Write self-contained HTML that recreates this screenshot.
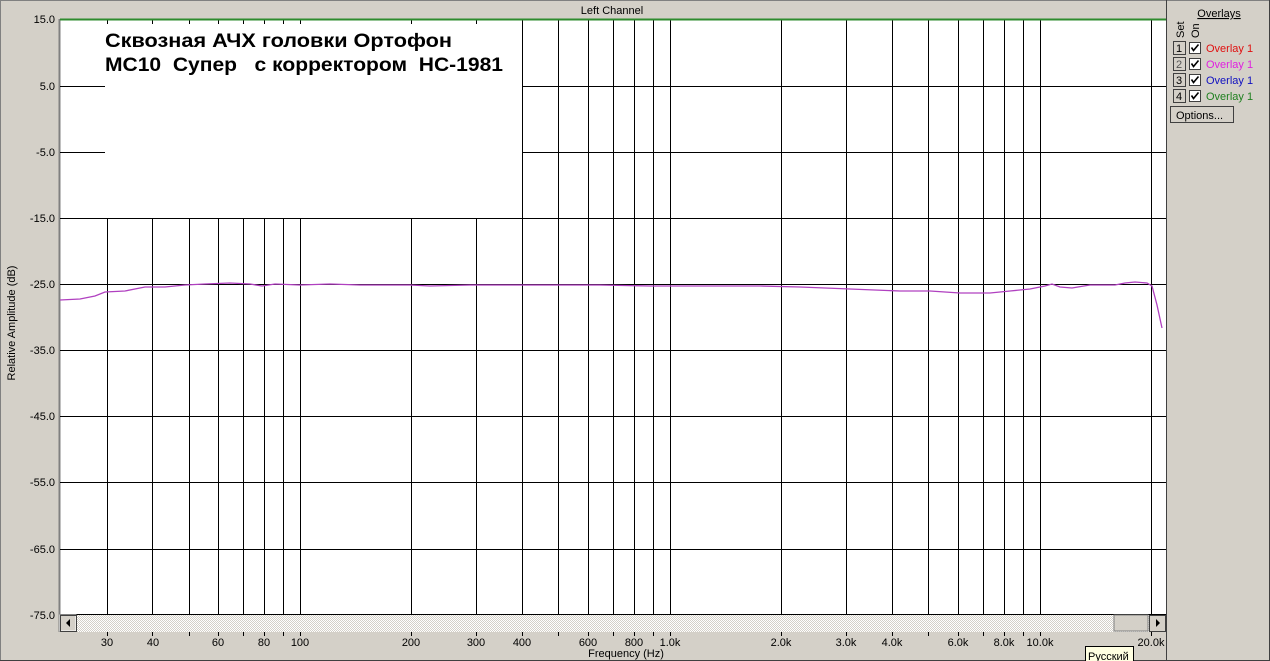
<!DOCTYPE html>
<html><head><meta charset="utf-8"><style>
html,body{margin:0;padding:0;background:#d4d0c8;}
svg{display:block;font-family:"Liberation Sans",sans-serif;}
</style></head><body>
<svg width="1270" height="661" viewBox="0 0 1270 661" xmlns="http://www.w3.org/2000/svg">
<defs>
<pattern id="dots" width="2" height="2" patternUnits="userSpaceOnUse"><rect width="2" height="2" fill="#fff"/><rect width="1" height="1" fill="#d4d0c8"/><rect x="1" y="1" width="1" height="1" fill="#d4d0c8"/></pattern>
</defs>
<rect x="0" y="0" width="1270" height="661" fill="#d4d0c8"/>
<line x1="0.5" y1="0" x2="0.5" y2="661" stroke="#808080"/>
<line x1="0" y1="0.5" x2="1270" y2="0.5" stroke="#808080"/>
<line x1="0" y1="660.5" x2="1270" y2="660.5" stroke="#404040"/>
<line x1="1269.5" y1="0" x2="1269.5" y2="661" stroke="#404040"/>
<line x1="1166.5" y1="0" x2="1166.5" y2="661" stroke="#404040"/>
<text x="612" y="14" font-size="11" text-anchor="middle">Left Channel</text>
<rect x="60" y="19" width="1106" height="596" fill="#fff"/>
<line x1="59.5" y1="19" x2="59.5" y2="632" stroke="#808080" stroke-width="2"/>
<g stroke="#000" stroke-width="1">
<line x1="60" x2="1166" y1="86.5" y2="86.5"/>
<line x1="60" x2="1166" y1="152.5" y2="152.5"/>
<line x1="60" x2="1166" y1="218.5" y2="218.5"/>
<line x1="60" x2="1166" y1="284.5" y2="284.5"/>
<line x1="60" x2="1166" y1="350.5" y2="350.5"/>
<line x1="60" x2="1166" y1="416.5" y2="416.5"/>
<line x1="60" x2="1166" y1="482.5" y2="482.5"/>
<line x1="60" x2="1166" y1="549.5" y2="549.5"/>
<line x1="60" x2="1166" y1="614.5" y2="614.5"/>
<line y1="19" y2="615" x1="107.5" x2="107.5"/><line y1="19" y2="615" x1="152.5" x2="152.5"/><line y1="19" y2="615" x1="189.5" x2="189.5"/><line y1="19" y2="615" x1="218.5" x2="218.5"/><line y1="19" y2="615" x1="243.5" x2="243.5"/><line y1="19" y2="615" x1="264.5" x2="264.5"/><line y1="19" y2="615" x1="283.5" x2="283.5"/><line y1="19" y2="615" x1="300.5" x2="300.5"/><line y1="19" y2="615" x1="411.5" x2="411.5"/><line y1="19" y2="615" x1="476.5" x2="476.5"/><line y1="19" y2="615" x1="522.5" x2="522.5"/><line y1="19" y2="615" x1="558.5" x2="558.5"/><line y1="19" y2="615" x1="588.5" x2="588.5"/><line y1="19" y2="615" x1="613.5" x2="613.5"/><line y1="19" y2="615" x1="634.5" x2="634.5"/><line y1="19" y2="615" x1="653.5" x2="653.5"/><line y1="19" y2="615" x1="670.5" x2="670.5"/><line y1="19" y2="615" x1="781.5" x2="781.5"/><line y1="19" y2="615" x1="846.5" x2="846.5"/><line y1="19" y2="615" x1="892.5" x2="892.5"/><line y1="19" y2="615" x1="928.5" x2="928.5"/><line y1="19" y2="615" x1="958.5" x2="958.5"/><line y1="19" y2="615" x1="983.5" x2="983.5"/><line y1="19" y2="615" x1="1004.5" x2="1004.5"/><line y1="19" y2="615" x1="1023.5" x2="1023.5"/><line y1="19" y2="615" x1="1040.5" x2="1040.5"/><line y1="19" y2="615" x1="1151.5" x2="1151.5"/>
</g>
<rect x="105" y="24" width="417" height="194" fill="#fff"/>
<line x1="60" x2="1166" y1="19.5" y2="19.5" stroke="#2e8b2e" stroke-width="2"/>
<text x="105" y="47" font-size="19" font-weight="bold" textLength="347" lengthAdjust="spacingAndGlyphs">Сквозная АЧХ  головки Ортофон</text>
<text x="105" y="71" font-size="19" font-weight="bold" xml:space="preserve" textLength="398" lengthAdjust="spacingAndGlyphs">МС10  Супер   с корректором  НС-1981</text>
<polyline fill="none" stroke="#b040c0" stroke-width="1.3" points="60,300 80,299 95,296 105,292 125,291 145,287 165,287 185,285 205,284 230,283 250,284 262,286 275,284 300,285 330,284 360,285 410,285 430,286 470,285 520,285 560,285 600,285 650,286 700,286 760,286 800,287 850,289 900,291 930,291 960,293 990,293 1010,291 1030,289 1045,286 1052,284 1060,287 1072,288 1090,285 1115,285 1125,283 1135,282 1147,283 1152,286 1157,305 1162,328"/>
<g font-size="11" text-anchor="end">
<text x="55" y="23">15.0</text><text x="55" y="90">5.0</text><text x="55" y="156">-5.0</text><text x="55" y="222">-15.0</text><text x="55" y="288">-25.0</text><text x="55" y="354">-35.0</text><text x="55" y="420">-45.0</text><text x="55" y="486">-55.0</text><text x="55" y="553">-65.0</text><text x="55" y="619">-75.0</text>
</g>
<text transform="translate(15,323) rotate(-90)" font-size="11" text-anchor="middle">Relative Amplitude (dB)</text>
<rect x="60" y="615" width="1106" height="17" fill="url(#dots)"/>
<rect x="60" y="615" width="16" height="16" fill="#d4d0c8" stroke="#fff"/><rect x="60.5" y="615.5" width="16" height="16" fill="none" stroke="#404040"/>
<polygon points="70,619 70,627 66,623" fill="#000"/>
<rect x="1114" y="615" width="34" height="16" fill="#d4d0c8" stroke="#808080"/>
<rect x="1149.5" y="615.5" width="16" height="16" fill="#d4d0c8" stroke="#404040"/>
<polygon points="1156,619 1156,627 1160,623" fill="#000"/>
<g stroke="#000"><line x1="107.5" x2="107.5" y1="632" y2="636"/><line x1="152.5" x2="152.5" y1="632" y2="636"/><line x1="189.5" x2="189.5" y1="632" y2="636"/><line x1="218.5" x2="218.5" y1="632" y2="636"/><line x1="243.5" x2="243.5" y1="632" y2="636"/><line x1="264.5" x2="264.5" y1="632" y2="636"/><line x1="283.5" x2="283.5" y1="632" y2="636"/><line x1="300.5" x2="300.5" y1="632" y2="636"/><line x1="411.5" x2="411.5" y1="632" y2="636"/><line x1="476.5" x2="476.5" y1="632" y2="636"/><line x1="522.5" x2="522.5" y1="632" y2="636"/><line x1="558.5" x2="558.5" y1="632" y2="636"/><line x1="588.5" x2="588.5" y1="632" y2="636"/><line x1="613.5" x2="613.5" y1="632" y2="636"/><line x1="634.5" x2="634.5" y1="632" y2="636"/><line x1="653.5" x2="653.5" y1="632" y2="636"/><line x1="670.5" x2="670.5" y1="632" y2="636"/><line x1="781.5" x2="781.5" y1="632" y2="636"/><line x1="846.5" x2="846.5" y1="632" y2="636"/><line x1="892.5" x2="892.5" y1="632" y2="636"/><line x1="928.5" x2="928.5" y1="632" y2="636"/><line x1="958.5" x2="958.5" y1="632" y2="636"/><line x1="983.5" x2="983.5" y1="632" y2="636"/><line x1="1004.5" x2="1004.5" y1="632" y2="636"/><line x1="1023.5" x2="1023.5" y1="632" y2="636"/><line x1="1040.5" x2="1040.5" y1="632" y2="636"/><line x1="1151.5" x2="1151.5" y1="632" y2="636"/></g>
<g font-size="11" text-anchor="middle">
<text x="107" y="646">30</text><text x="153" y="646">40</text><text x="218" y="646">60</text><text x="264" y="646">80</text><text x="300" y="646">100</text><text x="411" y="646">200</text><text x="476" y="646">300</text><text x="522" y="646">400</text><text x="588" y="646">600</text><text x="634" y="646">800</text><text x="670" y="646">1.0k</text><text x="781" y="646">2.0k</text><text x="846" y="646">3.0k</text><text x="892" y="646">4.0k</text><text x="958" y="646">6.0k</text><text x="1004" y="646">8.0k</text><text x="1040" y="646">10.0k</text><text x="1151" y="646">20.0k</text>
</g>
<text x="626" y="657" font-size="11" text-anchor="middle">Frequency (Hz)</text>
<rect x="1085.5" y="646.5" width="48" height="16" fill="#ffffe1" stroke="#000"/>
<text x="1088" y="660" font-size="11">Русский</text>
<text x="1219" y="17" font-size="11" text-anchor="middle" text-decoration="underline">Overlays</text>
<text transform="translate(1184,38) rotate(-90)" font-size="11">Set</text>
<text transform="translate(1199,38) rotate(-90)" font-size="11">On</text>
<g font-size="11">
<g><rect x="1173.5" y="41.5" width="12" height="13" fill="#d4d0c8" stroke="#404040"/><text x="1176" y="52">1</text><rect x="1189.5" y="42.5" width="11" height="11" fill="#fff" stroke="#404040"/><path d="M1191.5 47.5l2 3 5-6" fill="none" stroke="#000" stroke-width="1.6"/><text x="1206" y="52" fill="#e01010">Overlay 1</text></g>
<g><rect x="1173.5" y="57.5" width="12" height="13" fill="#d4d0c8" stroke="#404040"/><text x="1176" y="68" fill="#555">2</text><rect x="1189.5" y="58.5" width="11" height="11" fill="#fff" stroke="#404040"/><path d="M1191.5 63.5l2 3 5-6" fill="none" stroke="#000" stroke-width="1.6"/><text x="1206" y="68" fill="#e020e0">Overlay 1</text></g>
<g><rect x="1173.5" y="73.5" width="12" height="13" fill="#d4d0c8" stroke="#404040"/><text x="1176" y="84">3</text><rect x="1189.5" y="74.5" width="11" height="11" fill="#fff" stroke="#404040"/><path d="M1191.5 79.5l2 3 5-6" fill="none" stroke="#000" stroke-width="1.6"/><text x="1206" y="84" fill="#1010c0">Overlay 1</text></g>
<g><rect x="1173.5" y="89.5" width="12" height="13" fill="#d4d0c8" stroke="#404040"/><text x="1176" y="100">4</text><rect x="1189.5" y="90.5" width="11" height="11" fill="#fff" stroke="#404040"/><path d="M1191.5 95.5l2 3 5-6" fill="none" stroke="#000" stroke-width="1.6"/><text x="1206" y="100" fill="#208020">Overlay 1</text></g>
<rect x="1170.5" y="106.5" width="63" height="16" fill="#d4d0c8" stroke="#404040"/>
<text x="1176" y="119">Options...</text>
</g>
</svg>
</body></html>
